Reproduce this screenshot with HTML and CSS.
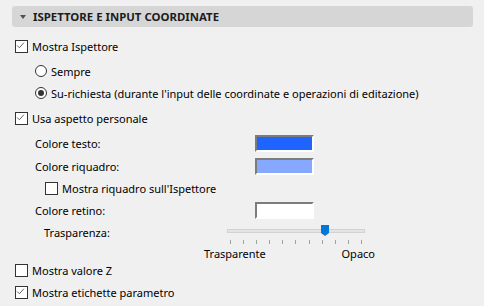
FILE: index.html
```html
<!DOCTYPE html>
<html lang="it">
<head>
    <meta charset="UTF-8">
    <title>Ispettore e input coordinate</title>
    <link rel="stylesheet" href="styles.css">
</head>
<body>
    <div class="panel">
        <!-- Intestazione della sezione -->
        <div class="section-head">
            <span class="arrow"></span>
            <span class="section-title">ISPETTORE E INPUT COORDINATE</span>
        </div>

        <div class="options">
            <label class="row lvl-0">
                <span class="check checked"><svg viewBox="0 0 13 13"><path d="M2.5 6.5 L5.2 9.2 L10.5 3.2" /></svg></span>
                Mostra Ispettore
            </label>
            <label class="row lvl-1 gap-3">
                <span class="radio"></span>
                Sempre
            </label>
            <label class="row lvl-1">
                <span class="radio selected"></span>
                Su-richiesta (durante l'input delle coordinate e operazioni di editazione)
            </label>

            <label class="row lvl-0 gap-3">
                <span class="check checked"><svg viewBox="0 0 13 13"><path d="M2.5 6.5 L5.2 9.2 L10.5 3.2" /></svg></span>
                Usa aspetto personale
            </label>
            <div class="row lvl-1 gap-3">
                <span class="field-label">Colore testo:</span>
                <span class="swatch swatch-text"></span>
            </div>
            <div class="row lvl-1 gap-1">
                <span class="field-label">Colore riquadro:</span>
                <span class="swatch swatch-frame"></span>
            </div>
            <label class="row lvl-2">
                <span class="check"></span>
                Mostra riquadro sull'Ispettore
            </label>
            <div class="row lvl-1">
                <span class="field-label">Colore retino:</span>
                <span class="swatch swatch-fill"></span>
            </div>

            <!-- Cursore trasparenza -->
            <div class="slider-row">
                <span class="slider-label">Trasparenza:</span>
                <div class="slider">
                    <div class="track">
                        <span class="thumb"><svg viewBox="0 0 8 11"><path d="M0 0 H8 V8 L4 11 L0 8 Z" /></svg></span>
                    </div>
                    <div class="ticks">
                        <i></i><i></i><i></i><i></i><i></i><i></i><i></i><i></i><i></i><i></i><i></i>
                    </div>
                    <div class="slider-ends">
                        <span>Trasparente</span>
                        <span>Opaco</span>
                    </div>
                </div>
            </div>

            <label class="row lvl-0">
                <span class="check"></span>
                Mostra valore Z
            </label>
            <label class="row lvl-0">
                <span class="check checked"><svg viewBox="0 0 13 13"><path d="M2.5 6.5 L5.2 9.2 L10.5 3.2" /></svg></span>
                Mostra etichette parametro
            </label>
        </div>
    </div>
</body>
</html>
```

FILE: styles.css
```css
body {
    margin: 0;
    background-color: #f0f0f0;
    font-family: "Noto Sans", "Open Sans", sans-serif;
    font-size: 11px;
    color: #000;
}
.panel {
    padding: 6px 11px 0 12px;
}
.section-head {
    display: flex;
    align-items: center;
    height: 21px;
    background-color: #d6d6d6;
    border-radius: 3px;
}
.arrow {
    width: 0;
    height: 0;
    margin-left: 8px;
    margin-right: 7px;
    border-left: 3px solid transparent;
    border-right: 3px solid transparent;
    border-top: 4px solid #505050;
}
.section-title {
    font-weight: bold;
    font-size: 11.4px;
    color: #1c1c1c;
}
.options {
    margin-top: 8px;
}
.row {
    display: flex;
    align-items: center;
    height: 22px;
    white-space: nowrap;
}
.lvl-0 {
    padding-left: 3px;
}
.lvl-1 {
    padding-left: 23px;
}
.lvl-2 {
    padding-left: 33px;
}
.gap-1 {
    margin-top: 1px;
}
.gap-3 {
    margin-top: 3px;
}
.check {
    box-sizing: border-box;
    width: 13px;
    height: 13px;
    margin-right: 4px;
    border: 1px solid #333;
    background-color: #fff;
    display: flex;
}
.check svg {
    width: 11px;
    height: 11px;
    margin: -1px 0 0 -1px;
    overflow: visible;
}
.check path {
    fill: none;
    stroke: #5a5a5a;
    stroke-width: 1.1;
}
.radio {
    box-sizing: border-box;
    width: 12px;
    height: 12px;
    margin-right: 4px;
    border: 1px solid #333;
    border-radius: 50%;
    background-color: #fff;
    display: flex;
    align-items: center;
    justify-content: center;
}
.radio.selected::after {
    content: "";
    width: 6px;
    height: 6px;
    border-radius: 50%;
    background-color: #333;
}
.field-label {
    width: 220px;
}
.swatch {
    box-sizing: border-box;
    width: 59px;
    height: 17px;
    border: 2px solid;
    border-color: #7c7c7c #fff #fff #7c7c7c;
}
.swatch-text {
    background-color: #1f64ff;
}
.swatch-frame {
    background-color: #86a9ff;
}
.swatch-fill {
    background-color: #fff;
}
.slider-row {
    display: flex;
    height: 38px;
    padding-left: 32px;
}
.slider-label {
    width: 183px;
    padding-top: 4px;
}
.slider {
    width: 138px;
}
.track {
    position: relative;
    box-sizing: border-box;
    height: 4px;
    margin-top: 8px;
    background-color: #e4e4e4;
    border: 1px solid #d2d2d2;
}
.thumb {
    position: absolute;
    left: 93px;
    top: -5px;
    width: 8px;
    height: 11px;
}
.thumb svg {
    display: block;
    width: 8px;
    height: 11px;
}
.thumb path {
    fill: #0078d7;
}
.ticks {
    display: flex;
    justify-content: space-between;
    padding: 0 3px;
    margin-top: 7px;
}
.ticks i {
    width: 1px;
    height: 4px;
    background-color: #a0a0a0;
}
.slider-ends {
    display: flex;
    justify-content: space-between;
    width: 171px;
    margin-left: -23px;
    margin-top: 2px;
}
```
